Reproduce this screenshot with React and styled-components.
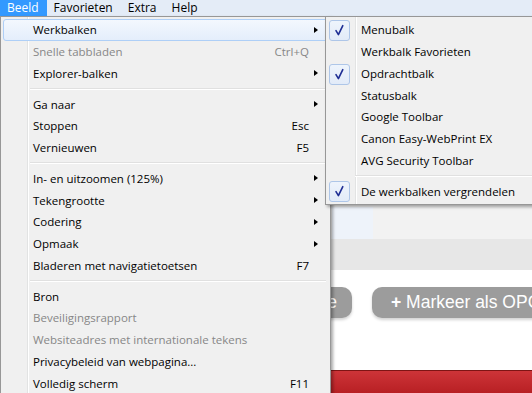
import React from "react";
import styled, { createGlobalStyle, css } from "styled-components";

const GlobalStyle = createGlobalStyle`
  html, body {
    margin: 0;
    padding: 0;
    overflow: hidden;
    background: #f0f0f0;
  }
`;

const ITEM_H = "21.75px";
const UI_FONT = `"Open Sans", "Segoe UI", "Noto Sans", sans-serif`;

const mainItems = [
  { label: "Werkbalken", arrow: true, hover: true },
  { label: "Snelle tabbladen", shortcut: "Ctrl+Q", disabled: true },
  { label: "Explorer-balken", arrow: true },
  { sep: true },
  { label: "Ga naar", arrow: true },
  { label: "Stoppen", shortcut: "Esc" },
  { label: "Vernieuwen", shortcut: "F5" },
  { sep: true },
  { label: "In- en uitzoomen (125%)", arrow: true },
  { label: "Tekengrootte", arrow: true },
  { label: "Codering", arrow: true },
  { label: "Opmaak", arrow: true },
  { label: "Bladeren met navigatietoetsen", shortcut: "F7" },
  { sep: true },
  { label: "Bron" },
  { label: "Beveiligingsrapport", disabled: true },
  { label: "Websiteadres met internationale tekens", disabled: true },
  { label: "Privacybeleid van webpagina..." },
  { label: "Volledig scherm", shortcut: "F11" },
];

const subItems = [
  { label: "Menubalk", checked: true },
  { label: "Werkbalk Favorieten" },
  { label: "Opdrachtbalk", checked: true },
  { label: "Statusbalk" },
  { label: "Google Toolbar" },
  { label: "Canon Easy-WebPrint EX" },
  { label: "AVG Security Toolbar" },
  { sep: true },
  { label: "De werkbalken vergrendelen", checked: true },
];

const Window = styled.div`
  position: relative;
  width: 532px;
  height: 393px;
  overflow: hidden;
  display: flex;
  flex-direction: column;
  font-family: ${UI_FONT};
  font-size: 11.5px;
  color: #000;
`;

const MenuBar = styled.div`
  height: 16px;
  flex: none;
  display: flex;
  background: #e4ecf7;
  font-size: 12px;
`;

const MenuTitle = styled.div`
  padding: 0 8px 0 7px;
  line-height: 16px;
  ${(p) =>
    p.$active &&
    css`
      background: #3399ff;
      color: #fff;
    `}
`;

/* page that sits behind the menus */
const Page = styled.div`
  flex: 1;
  display: flex;
  flex-direction: column;
  background: #f2f2f2;
`;

const CommandArea = styled.div`
  height: 223px;
  display: flex;
  align-items: flex-end;
  padding-left: 332px;
  background: #f2f2f2;
`;

const TabCell = styled.div`
  width: 41px;
  height: 32px;
  background: #eef3fa;
`;

const GrayStrip = styled.div`
  height: 31px;
  background: #e7e7e7;
`;

const Content = styled.div`
  height: 100px;
  background: #fff;
  display: flex;
  gap: 20px;
  padding: 17px 0 0 252px;
  box-sizing: border-box;
`;

const PillButton = styled.div`
  flex: none;
  height: 31px;
  box-sizing: border-box;
  border-radius: 10px;
  background: #9c9c9c;
  color: #fff;
  font-family: "Liberation Sans", Arial, sans-serif;
  font-size: 17.5px;
  line-height: 31px;
  white-space: nowrap;
  box-shadow: 0 2px 3px rgba(0, 0, 0, 0.18);
  width: ${(p) => p.$width || "auto"};
  text-align: ${(p) => p.$align || "left"};
  padding: ${(p) => p.$pad || "0 19px"};

  b {
    font-weight: bold;
  }
`;

const RedBar = styled.div`
  flex: 1;
  border-top: 1px solid #7e1414;
  background: linear-gradient(#cd3438, #b82024);
`;

/* menus */
const Dropdown = styled.div`
  position: absolute;
  top: 16px;
  left: ${(p) => p.$left}px;
  width: ${(p) => p.$width}px;
  box-sizing: border-box;
  padding: 2px;
  border: 1px solid #979797;
  box-shadow: 2px 2px 3px rgba(0, 0, 0, 0.35);
  background:
    linear-gradient(
      to right,
      transparent ${(p) => p.$gutter}px,
      #e2e3e3 ${(p) => p.$gutter}px,
      #e2e3e3 ${(p) => p.$gutter + 1}px,
      #ffffff ${(p) => p.$gutter + 1}px,
      #ffffff ${(p) => p.$gutter + 2}px,
      transparent ${(p) => p.$gutter + 2}px
    ),
    #f0f0f0;
  background-clip: padding-box;
`;

const Item = styled.div`
  height: ${ITEM_H};
  display: flex;
  align-items: center;
  box-sizing: border-box;
  padding-left: ${(p) => p.$indent}px;
  border: 1px solid transparent;
  border-radius: 3px;
  white-space: nowrap;
  color: ${(p) => (p.$disabled ? "#878787" : "#000")};
  ${(p) =>
    p.$hover &&
    css`
      border-color: #aecff7;
      background: linear-gradient(#f3f8fe, #e4eefb);
    `}
`;

const Label = styled.span`
  flex: 1;
`;

const Shortcut = styled.span`
  margin-right: 18px;
`;

const Arrow = styled.span`
  width: 0;
  height: 0;
  margin-right: 9px;
  border-left: 4px solid #000;
  border-top: 3.5px solid transparent;
  border-bottom: 3.5px solid transparent;
`;

const Separator = styled.div`
  height: 9px;
  display: flex;
  align-items: center;
  padding-left: ${(p) => p.$indent}px;
  padding-right: 2px;

  &::before {
    content: "";
    flex: 1;
    height: 1px;
    background: #e0e0e0;
    border-bottom: 1px solid #fff;
  }
`;

const CheckBox = styled.span`
  position: absolute;
  left: 0;
  top: 0;
  width: 21px;
  height: 21px;
  box-sizing: border-box;
  border: 1px solid #aec6e8;
  border-radius: 3px;
  background: linear-gradient(#eef4fc, #e2ebf8);
  display: flex;
  align-items: center;
  justify-content: center;
`;

const SubItem = styled(Item)`
  position: relative;
`;

const Check = () => (
  <CheckBox>
    <svg width="19" height="19" viewBox="0 0 19 19">
      <path
        d="M6 9.6 L8.4 13.6 L12.8 4.6"
        fill="none"
        stroke="#1f2e94"
        strokeWidth="1.6"
        strokeLinecap="round"
        strokeLinejoin="round"
      />
    </svg>
  </CheckBox>
);

export default function App() {
  return (
    <>
      <GlobalStyle />
      <Window>
        <MenuBar>
          <MenuTitle $active>Beeld</MenuTitle>
          <MenuTitle>Favorieten</MenuTitle>
          <MenuTitle>Extra</MenuTitle>
          <MenuTitle>Help</MenuTitle>
        </MenuBar>

        <Page>
          <CommandArea>
            <TabCell />
          </CommandArea>
          <GrayStrip />
          <Content>
            <PillButton $width="100px" $align="right" $pad="0 15px 0 0">
              Reactie
            </PillButton>
            <PillButton>
              <b>+</b> Markeer als OPGELOST
            </PillButton>
          </Content>
          <RedBar />
        </Page>

        <Dropdown $left={0} $width={331} $gutter={26}>
          {mainItems.map((it, i) =>
            it.sep ? (
              <Separator key={i} $indent={27} />
            ) : (
              <Item key={i} $indent={29} $hover={it.hover} $disabled={it.disabled}>
                <Label>{it.label}</Label>
                {it.shortcut && <Shortcut>{it.shortcut}</Shortcut>}
                {it.arrow && <Arrow />}
              </Item>
            )
          )}
        </Dropdown>

        <Dropdown $left={325} $width={220} $gutter={29}>
          {subItems.map((it, i) =>
            it.sep ? (
              <Separator key={i} $indent={27} />
            ) : (
              <SubItem key={i} $indent={32}>
                {it.checked && <Check />}
                <Label>{it.label}</Label>
              </SubItem>
            )
          )}
        </Dropdown>
      </Window>
    </>
  );
}
